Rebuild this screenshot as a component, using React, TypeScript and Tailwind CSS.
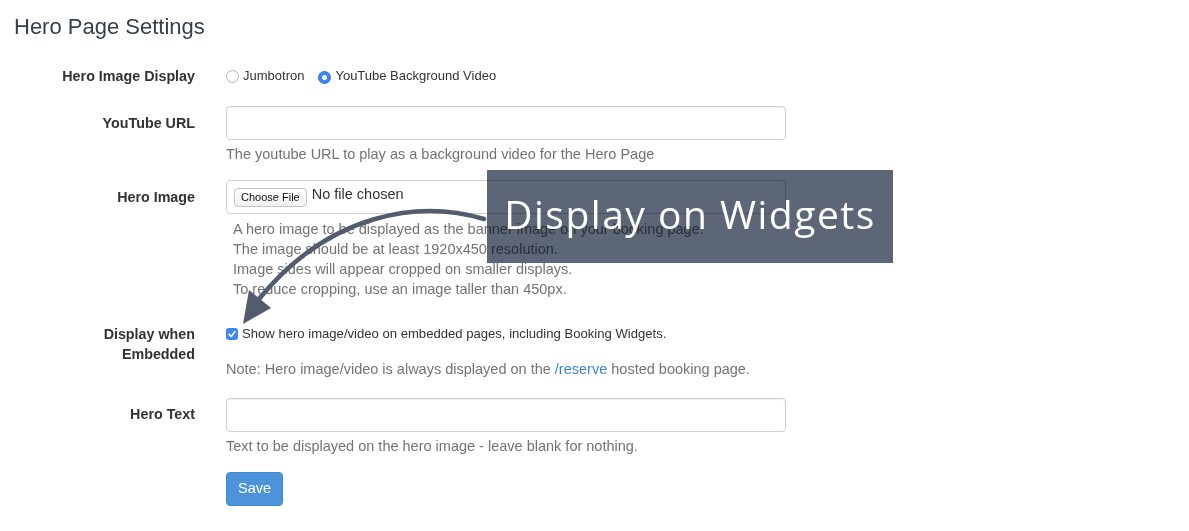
import React from "react";

function Radio({ checked }: { checked?: boolean }) {
  return checked ? (
    <span className="inline-flex h-[13px] w-[13px] items-center justify-center rounded-full bg-[#3b87f5] border border-[#2f76e0]">
      <span className="h-[5px] w-[5px] rounded-full bg-white" />
    </span>
  ) : (
    <span className="inline-block h-[13px] w-[13px] rounded-full border border-[#b5b5b5] bg-white" />
  );
}

export default function App() {
  return (
    <div
      className="relative w-[1189px] h-[531px] bg-white overflow-hidden"
      style={{ fontFamily: '"Liberation Sans", Arial, sans-serif' }}
    >
      <h1 className="pl-[14px] pt-[13px] text-[22px] leading-[28px] text-[#343e4c]">Hero Page Settings</h1>

      {/* Row 1 */}
      <div className="mt-[25px] grid grid-cols-[195px_560px] gap-x-[31px]">
        <div className="text-right text-[14.3px] leading-[20px] font-bold text-[#333]">Hero Image Display</div>
        <div className="flex items-center h-[20px] text-[13px] text-[#333]">
          <Radio />
          <span className="ml-[4px]">Jumbotron</span>
          <span className="ml-[14px]"><Radio checked /></span>
          <span className="ml-[4px]">YouTube Background Video</span>
        </div>
      </div>

      {/* Row 2 */}
      <div className="mt-[20px] grid grid-cols-[195px_560px] gap-x-[31px]">
        <div className="pt-[7px] text-right text-[14.3px] leading-[20px] font-bold text-[#333]">YouTube URL</div>
        <div>
          <div className="h-[34px] rounded-[4px] border border-[#cfcfcf] shadow-[inset_0_1px_1px_rgba(0,0,0,0.06)]" />
          <p className="mt-[4px] text-[14.5px] leading-[20px] text-[#737373]">
            The youtube URL to play as a background video for the Hero Page
          </p>
        </div>
      </div>

      {/* Row 3 */}
      <div className="mt-[16px] grid grid-cols-[195px_560px] gap-x-[31px]">
        <div className="pt-[7px] text-right text-[14.3px] leading-[20px] font-bold text-[#333]">Hero Image</div>
        <div>
          <div className="flex h-[34px] items-center rounded-[4px] border border-[#cfcfcf] pl-[7px]">
            <span className="flex h-[19px] items-center rounded-[4px] border border-[#c4c4c4] bg-gradient-to-b from-white to-[#f0f0f0] px-[6px] text-[11px] text-[#111]">
              Choose File
            </span>
            <span className="ml-[5px] -mt-[4px] text-[14.5px] text-[#333]">No file chosen</span>
          </div>
          <div className="mt-[5px] pl-[7px] text-[14.5px] leading-[20px] text-[#737373]">
            <p>A hero image to be displayed as the banner image on your booking page.</p>
            <p>The image should be at least 1920x450 resolution.</p>
            <p>Image sides will appear cropped on smaller displays.</p>
            <p>To reduce cropping, use an image taller than 450px.</p>
          </div>
        </div>
      </div>

      {/* Row 4 */}
      <div className="mt-[25px] grid grid-cols-[195px_560px] gap-x-[31px]">
        <div className="text-right text-[14.3px] leading-[20px] font-bold text-[#333]">
          Display when
          <br />
          Embedded
        </div>
        <div>
          <div className="flex h-[20px] items-center text-[13.1px] text-[#333]">
            <span className="inline-flex h-[12px] w-[12px] items-center justify-center rounded-[3px] bg-[#3b87f5]">
              <svg width="10" height="10" viewBox="0 0 10 10">
                <path d="M2 5.2 L4.2 7.4 L8 2.6" fill="none" stroke="white" strokeWidth="1.6" strokeLinecap="round" strokeLinejoin="round" />
              </svg>
            </span>
            <span className="ml-[4px]">Show hero image/video on embedded pages, including Booking Widgets.</span>
          </div>
          <p className="mt-[15px] text-[14.5px] leading-[20px] text-[#737373]">
            Note: Hero image/video is always displayed on the <span className="text-[#3a86d8]">/reserve</span> hosted booking page.
          </p>
        </div>
      </div>

      {/* Row 5 */}
      <div className="mt-[19px] grid grid-cols-[195px_560px] gap-x-[31px]">
        <div className="pt-[6px] text-right text-[14.3px] leading-[20px] font-bold text-[#333]">Hero Text</div>
        <div>
          <div className="h-[34px] rounded-[4px] border border-[#cfcfcf] shadow-[inset_0_1px_1px_rgba(0,0,0,0.06)]" />
          <p className="mt-[4px] text-[14.5px] leading-[20px] text-[#737373]">
            Text to be displayed on the hero image - leave blank for nothing.
          </p>
          <button className="mt-[16px] flex h-[34px] w-[57px] items-center justify-center rounded-[4px] border border-[#3f88d4] bg-[#4c93dc] text-[14.5px] text-white">
            Save
          </button>
        </div>
      </div>

      {/* Overlay annotation */}
      <div className="absolute left-[487px] top-[170px] h-[93px] w-[406px] bg-[#5c6677] mix-blend-multiply" />
      <svg className="pointer-events-none absolute left-0 top-0" width="1189" height="531" viewBox="0 0 1189 531">
        <path d="M484 219 C 420 200, 330 212, 259 299" fill="none" stroke="#525c6c" strokeWidth="4.5" strokeLinecap="round" />
        <polygon points="243,324 249,290 271,308" fill="#525c6c" />
      </svg>
      <div
        className="absolute left-[487px] top-[168px] flex h-[93px] w-[406px] items-center justify-center text-[39px] font-medium tracking-[1.5px] text-white"
        style={{ fontFamily: '"Open Sans", sans-serif' }}
      >
        Display on Widgets
      </div>
    </div>
  );
}
